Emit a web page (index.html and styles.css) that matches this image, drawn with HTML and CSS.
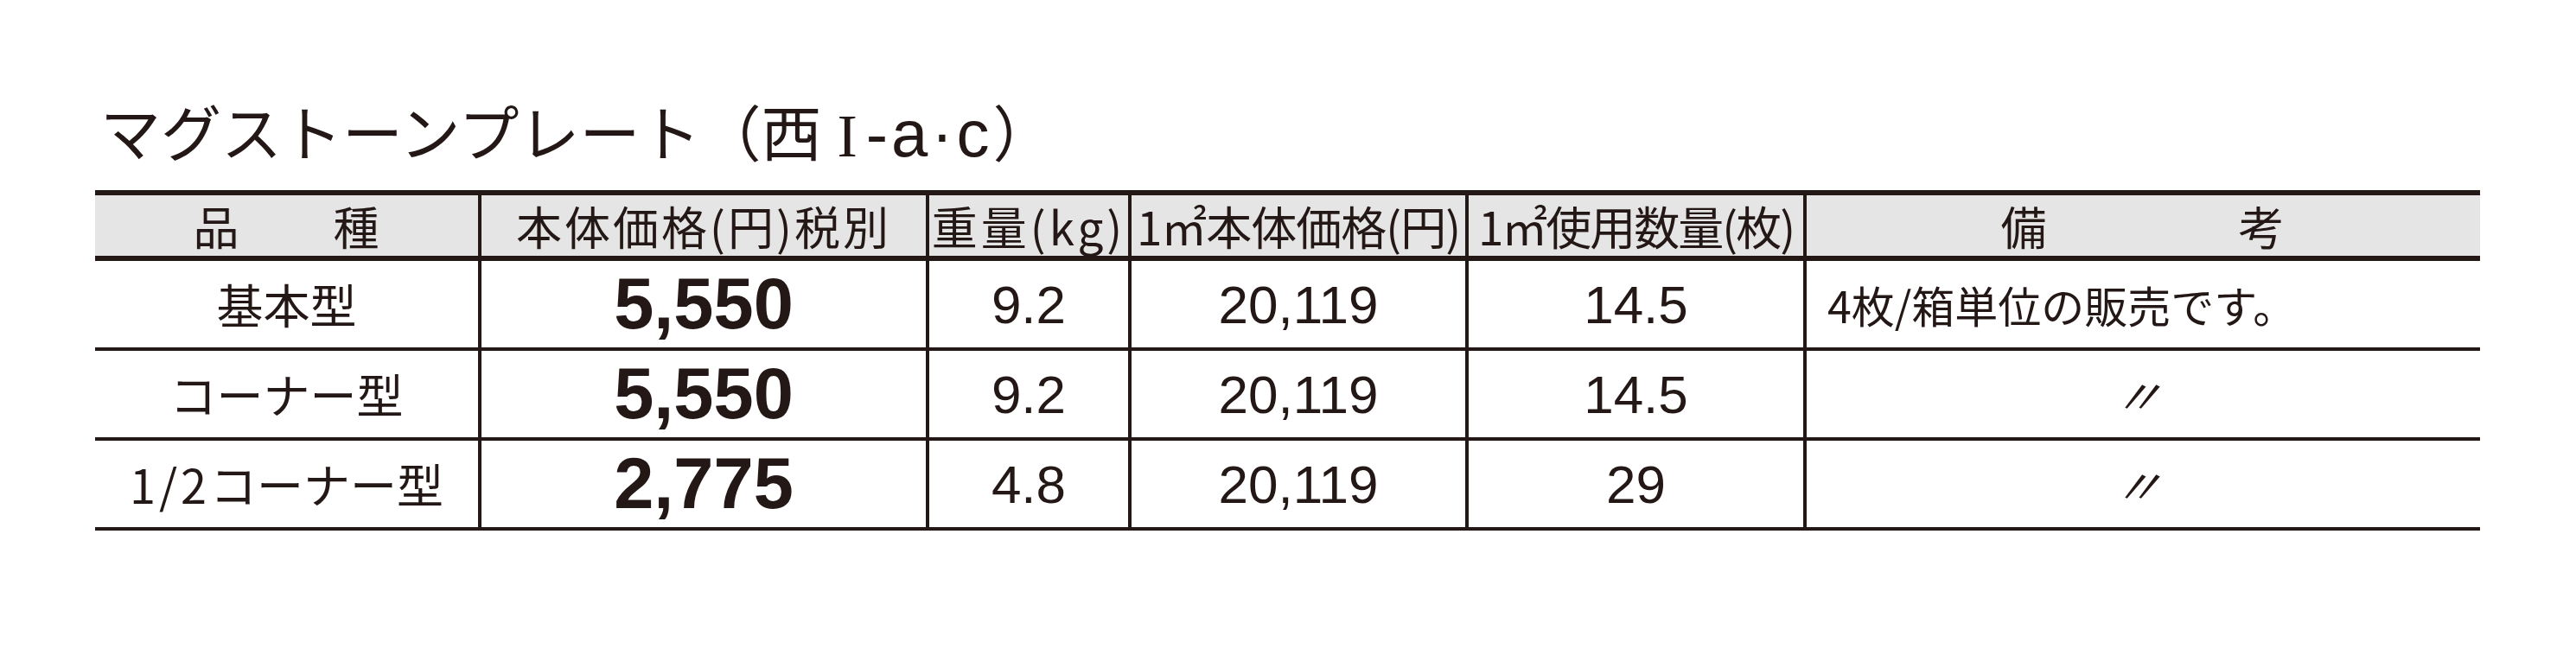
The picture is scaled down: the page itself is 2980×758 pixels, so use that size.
FILE: index.html
```html
<!DOCTYPE html>
<html lang="ja">
<head>
<meta charset="utf-8">
<title>マグストーンプレート（西Ⅰ-a·c）</title>
<link rel="stylesheet" href="styles.css">
</head>
<body>
<div class="page">
  <h1 class="title">マグストーンプレート（西<span class="roman">I</span><span class="lat">-a·c</span>）</h1>
  <div class="spec">
    <div class="cell hd first ls-c1">品　　種</div>
    <div class="cell hd ls-c2">本体価格(円)税別</div>
    <div class="cell hd ls-c3">重量(kg)</div>
    <div class="cell hd ls-c4">1㎡本体価格(円)</div>
    <div class="cell hd ls-c5">1㎡使用数量(枚)</div>
    <div class="cell hd ls-c6">備　　　　考</div>

    <div class="cell td first name">基本型</div>
    <div class="cell td price">5,550</div>
    <div class="cell td num">9.2</div>
    <div class="cell td num">20,119</div>
    <div class="cell td num">14.5</div>
    <div class="cell td note">4枚/箱単位の販売です。</div>

    <div class="cell td first name">コーナー型</div>
    <div class="cell td price">5,550</div>
    <div class="cell td num">9.2</div>
    <div class="cell td num">20,119</div>
    <div class="cell td num">14.5</div>
    <div class="cell td ditto"><span class="ditto-mark">〃</span></div>

    <div class="cell td first name"><span class="frac">1/2</span>コーナー型</div>
    <div class="cell td price">2,775</div>
    <div class="cell td num">4.8</div>
    <div class="cell td num">20,119</div>
    <div class="cell td num">29</div>
    <div class="cell td ditto"><span class="ditto-mark">〃</span></div>
  </div>
</div>
</body>
</html>
```

FILE: styles.css
```css
html, body {
  margin: 0;
  padding: 0;
  background: #ffffff;
}

body {
  color: #231815;
  font-family: "Noto Sans CJK JP", "Noto Sans", sans-serif;
}

.page {
  padding: 116px 0 0 110px;
}

.title {
  margin: 0 0 0 6px;
  height: 70px;
  font-size: 70px;
  line-height: 70px;
  font-weight: 400;
  white-space: nowrap;
}

.roman {
  font-family: "Liberation Serif", "Times New Roman", serif;
  font-size: 70px;
  margin-left: 18px;
  margin-right: 10px;
}

.lat {
  font-family: "Liberation Sans", Arial, sans-serif;
  font-size: 76px;
  letter-spacing: 4px;
}

.spec {
  margin-top: 34px;
  width: 2759px;
  display: grid;
  grid-template-columns: 443px 518px 234px 390px 391px 783px;
  border-top: 6px solid #231815;
}

.cell {
  box-sizing: border-box;
  display: flex;
  align-items: center;
  justify-content: center;
  border-left: 4px solid #231815;
  white-space: nowrap;
}

.cell.first {
  border-left: 0;
}

.hd {
  height: 76px;
  background: #e5e5e5;
  border-bottom: 6px solid #231815;
  font-size: 53px;
  line-height: 1;
}

.ls-c1 { letter-spacing: 1px; }
.ls-c2 { letter-spacing: 3px; }
.ls-c3 { letter-spacing: 4px; }
.ls-c4 { letter-spacing: -1px; }
.ls-c5 { letter-spacing: -2px; }
.ls-c6 { letter-spacing: 2px; }

.td {
  height: 104px;
  border-bottom: 4px solid #231815;
}

.name {
  font-size: 54px;
  line-height: 1;
}

.frac {
  letter-spacing: 4px;
}

.price {
  font-family: "Liberation Sans", Arial, sans-serif;
  font-weight: 700;
  font-size: 83px;
}

.num {
  font-family: "Liberation Sans", Arial, sans-serif;
  font-size: 62px;
}

.note {
  justify-content: flex-start;
  padding-left: 24px;
  font-size: 50px;
  line-height: 1;
}

.ditto {
  font-size: 56px;
  line-height: 1;
}

.ditto-mark {
  display: inline-block;
  transform: skewX(-22deg);
}
```
